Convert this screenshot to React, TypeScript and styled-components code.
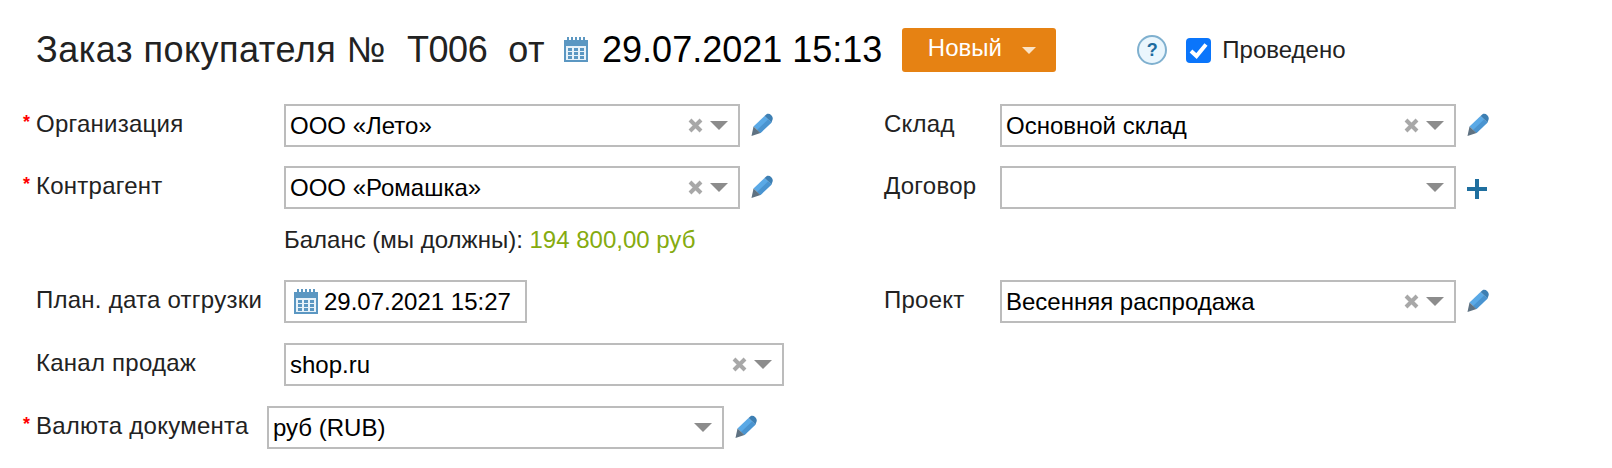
import React from "react";
import styled, { createGlobalStyle } from "styled-components";

const Global = createGlobalStyle`
  html, body { margin: 0; padding: 0; background: #fff; }
  body { font-family: "Liberation Sans", Arial, sans-serif; width: 1612px; height: 468px; overflow: hidden; }
`;

const Page = styled.div`
  padding: 28px 0 0 23px;
`;
const Header = styled.header`
  display: flex;
  align-items: center;
  height: 44px;
  padding-left: 13px;
  margin-bottom: 32px;
`;
const Title = styled.h1`
  margin: 0;
  font-size: 36px;
  font-weight: 400;
  color: #222;
  white-space: pre;
  line-height: 44px;
  letter-spacing: 0.5px;
`;
const DocNumber = styled.span`
  letter-spacing: -0.4px;
`;
const CalSlot = styled.span<{ $ml: number; $mr: number }>`
  display: inline-flex;
  margin: 0 ${(p) => p.$mr}px 0 ${(p) => p.$ml}px;
`;
const DocDate = styled.span`
  font-size: 36px;
  color: #000;
  line-height: 44px;
  white-space: pre;
`;
const StatusButton = styled.button`
  width: 154px;
  height: 44px;
  margin-left: 20px;
  padding: 0 0 4px 5px;
  border: 0;
  border-radius: 3px;
  background: #e68213;
  color: #fff;
  font: 400 24px "Liberation Sans", Arial, sans-serif;
  display: flex;
  align-items: center;
  justify-content: center;
  gap: 20px;
`;
const ButtonCaret = styled.span`
  width: 0;
  height: 0;
  margin-top: 5px;
  border: 7px solid transparent;
  border-top: 7px solid #fbe3c6;
  border-bottom: 0;
`;
const Help = styled.span`
  box-sizing: border-box;
  width: 30px;
  height: 30px;
  margin-left: 81px;
  border: 2px solid #7fb0cf;
  border-radius: 50%;
  background: #eaf6fd;
  color: #1d6c9f;
  font: 700 18px/26px "Liberation Sans", Arial, sans-serif;
  text-align: center;
`;
const CheckLabel = styled.label`
  display: flex;
  align-items: center;
  margin-left: 19px;
  font-size: 24px;
  color: #222;
  gap: 11px;
`;
const CheckBox = styled.span`
  width: 25px;
  height: 25px;
  border-radius: 4px;
  background: #0a75fb;
  display: flex;
  align-items: center;
  justify-content: center;
`;
const Form = styled.div`
  display: flex;
`;
const Column = styled.div<{ $width: number }>`
  width: ${(p) => p.$width}px;
  display: flex;
  flex-direction: column;
`;
const Row = styled.div<{ $gap?: number }>`
  display: flex;
  align-items: flex-start;
  height: 43px;
  margin-bottom: ${(p) => p.$gap ?? 20}px;
`;
const Star = styled.span`
  width: 13px;
  flex: none;
  color: #f00;
  font-size: 18px;
  font-weight: 700;
  line-height: 36px;
`;
const Label = styled.span<{ $width: number }>`
  flex: none;
  width: ${(p) => p.$width}px;
  font-size: 24px;
  line-height: 40px;
  letter-spacing: 0.25px;
  color: #222;
  white-space: nowrap;
`;
const Field = styled.div<{ $width: number }>`
  box-sizing: border-box;
  width: ${(p) => p.$width}px;
  height: 43px;
  flex: none;
  border: 2px solid #bcbcbc;
  display: flex;
  align-items: center;
  padding: 0 10px 0 4px;
  font-size: 24px;
  color: #000;
  background: #fff;
`;
const Value = styled.span`
  flex: 1;
  white-space: nowrap;
`;
const Clear = styled.svg`
  width: 15px;
  height: 15px;
  margin-right: 7px;
`;
const Caret = styled.span`
  width: 0;
  height: 0;
  border: 9px solid transparent;
  border-top: 9px solid #8c8c8c;
  border-bottom: 0;
`;
const Action = styled.span<{ $top?: number }>`
  display: inline-flex;
  margin: ${(p) => p.$top ?? 9}px 0 0 10px;
`;
const Balance = styled.div`
  height: 71px;
  margin-left: 261px;
  font-size: 24px;
  line-height: 62px;
  color: #222;
  white-space: nowrap;
`;
const Money = styled.span`
  color: #85ab0f;
`;
const Spacer = styled.div`
  height: 71px;
`;

const CalendarIcon = ({ size = 26 }: { size?: number }) => (
  <svg width={size} height={size} viewBox="0 0 26 26">
    <rect x="1" y="3" width="24" height="22" fill="#5b97c2" />
    <rect x="3" y="9" width="20" height="14" fill="#e8f2f9" />
    {[4, 8, 12, 16, 20].map((x) => (
      <rect key={x} x={x} y="0" width="2" height="5" fill="#5b97c2" />
    ))}
    {[5, 11, 17].map((x) =>
      [11, 15, 19].map((y) => <rect key={`${x}-${y}`} x={x} y={y} width="4" height="3" fill="#5b97c2" />)
    )}
  </svg>
);

const PencilIcon = () => (
  <svg width="24" height="24" viewBox="0 0 24 24">
    <path d="M3.500 13.500 14.500 3 21.500 9.500 10.500 20Z" fill="#5aa9e6" />
    <path d="M7 17 18 6.500 21.500 9.500 10.500 20Z" fill="#4a94d0" />
    <path d="M14.500 3 16.500 1.300C18 .4 19.800.8 21.300 2.200 22.800 3.700 23.200 5.600 22.400 7L21.500 9.500Z" fill="#3d7fb3" />
    <path d="M3.500 13.500 10.500 20 1.500 23Z" fill="#5f7282" />
  </svg>
);

const ClearIcon = () => (
  <Clear viewBox="0 0 15 15">
    <path d="M2 2 13 13M13 2 2 13" stroke="#a8a8a8" strokeWidth="4" />
  </Clear>
);

const PlusIcon = () => (
  <svg width="22" height="22" viewBox="0 0 22 22">
    <path d="M11 1v20M1 11h20" stroke="#1f6f9f" strokeWidth="4" />
  </svg>
);

const Select = ({ width, value, clear = true }: { width: number; value?: string; clear?: boolean }) => (
  <Field $width={width}>
    <Value>{value}</Value>
    {clear && <ClearIcon />}
    <Caret />
  </Field>
);

export default function App() {
  return (
    <Page>
      <Global />
      <Header>
        <Title>
          {"Заказ покупателя №  "}
          <DocNumber>Т006</DocNumber>
          {"  от"}
        </Title>
        <CalSlot $ml={18} $mr={13}>
          <CalendarIcon />
        </CalSlot>
        <DocDate>29.07.2021 15:13</DocDate>
        <StatusButton>
          Новый
          <ButtonCaret />
        </StatusButton>
        <Help>?</Help>
        <CheckLabel>
          <CheckBox>
            <svg width="19" height="17" viewBox="0 0 19 17">
              <path d="M2 9 7.500 14 17 2.500" fill="none" stroke="#fff" strokeWidth="4" />
            </svg>
          </CheckBox>
          Проведено
        </CheckLabel>
      </Header>
      <Form>
        <Column $width={861}>
          <Row $gap={19}>
            <Star>*</Star>
            <Label $width={248}>Организация</Label>
            <Select width={456} value="ООО «Лето»" />
            <Action>
              <PencilIcon />
            </Action>
          </Row>
          <Row $gap={0}>
            <Star>*</Star>
            <Label $width={248}>Контрагент</Label>
            <Select width={456} value="ООО «Ромашка»" />
            <Action>
              <PencilIcon />
            </Action>
          </Row>
          <Balance>
            Баланс (мы должны): <Money>194 800,00 руб</Money>
          </Balance>
          <Row>
            <Star />
            <Label $width={248}>План. дата отгрузки</Label>
            <Field $width={243}>
              <CalSlot $ml={3} $mr={5}>
                <CalendarIcon />
              </CalSlot>
              <Value>29.07.2021 15:27</Value>
            </Field>
          </Row>
          <Row>
            <Star />
            <Label $width={248}>Канал продаж</Label>
            <Select width={500} value="shop.ru" />
          </Row>
          <Row>
            <Star>*</Star>
            <Label $width={231}>Валюта документа</Label>
            <Select width={457} value="руб (RUB)" clear={false} />
            <Action>
              <PencilIcon />
            </Action>
          </Row>
        </Column>
        <Column $width={640}>
          <Row $gap={19}>
            <Label $width={116}>Склад</Label>
            <Select width={456} value="Основной склад" />
            <Action>
              <PencilIcon />
            </Action>
          </Row>
          <Row $gap={0}>
            <Label $width={116}>Договор</Label>
            <Select width={456} clear={false} />
            <Action $top={12}>
              <PlusIcon />
            </Action>
          </Row>
          <Spacer />
          <Row>
            <Label $width={116}>Проект</Label>
            <Select width={456} value="Весенняя распродажа" />
            <Action>
              <PencilIcon />
            </Action>
          </Row>
        </Column>
      </Form>
    </Page>
  );
}
